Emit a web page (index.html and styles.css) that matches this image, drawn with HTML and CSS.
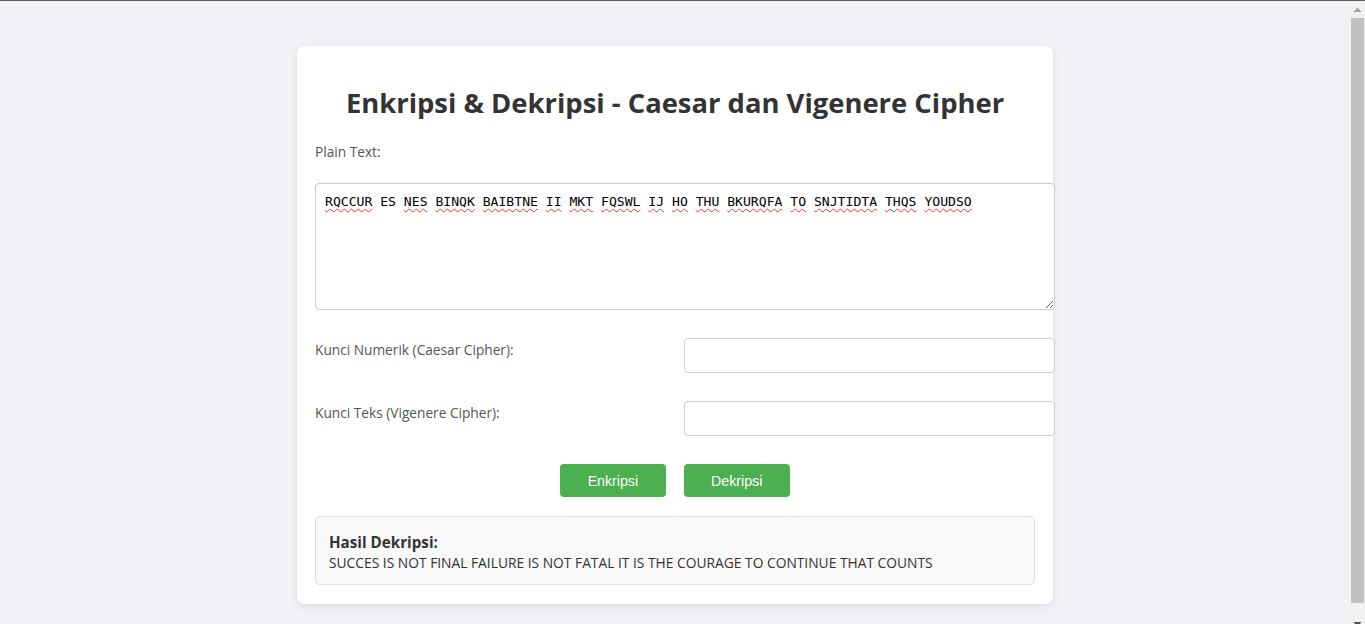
FILE: index.html
```html
<!DOCTYPE html>
<html lang="id">
<head>
<meta charset="utf-8">
<title>Enkripsi &amp; Dekripsi - Caesar dan Vigenere Cipher</title>
<link rel="stylesheet" href="styles.css">
</head>
<body>
<div class="card">
  <h1 class="title">Enkripsi &amp; Dekripsi - Caesar dan Vigenere Cipher</h1>
  <label class="label label-plain" id="plain-label">Plain Text:</label>
  <div class="plain" contenteditable="true" role="textbox" aria-multiline="true" aria-labelledby="plain-label" spellcheck="false"><span class="typo">RQCCUR</span> ES <span class="typo">NES</span> <span class="typo">BINQK</span> <span class="typo">BAIBTNE</span> <span class="typo">II</span> <span class="typo">MKT</span> <span class="typo">FQSWL</span> <span class="typo">IJ</span> <span class="typo">HO</span> <span class="typo">THU</span> <span class="typo">BKURQFA</span> <span class="typo">TO</span> <span class="typo">SNJTIDTA</span> <span class="typo">THQS</span> <span class="typo">YOUDSO</span></div>
  <div class="row">
    <label class="label row-label" for="knum">Kunci Numerik (Caesar Cipher):</label>
    <input id="knum" class="field" type="text">
  </div>
  <div class="row">
    <label class="label row-label" for="ktext">Kunci Teks (Vigenere Cipher):</label>
    <input id="ktext" class="field" type="text">
  </div>
  <div class="actions">
    <button class="btn" type="button">Enkripsi</button>
    <button class="btn" type="button">Dekripsi</button>
  </div>
  <div class="result">
    <div class="result-title">Hasil Dekripsi:</div>
    <div class="result-text">SUCCES IS NOT FINAL FAILURE IS NOT FATAL IT IS THE COURAGE TO CONTINUE THAT COUNTS</div>
  </div>
</div>
<div class="scrollbar" aria-hidden="true">
  <div class="sb-btn sb-up">
    <svg width="9" height="5" viewBox="0 0 9 5"><path d="M0.5 5 L4.5 0.5 L8.5 5 Z" fill="#a3a3a3"/></svg>
  </div>
  <div class="sb-thumb"></div>
  <div class="sb-track"></div>
  <div class="sb-btn sb-down">
    <svg width="9" height="5" viewBox="0 0 9 5"><path d="M0.5 0 L8.5 0 L4.5 4.5 Z" fill="#505050"/></svg>
  </div>
</div>
</body>
</html>
```
FILE: styles.css
```css
html {
  background: #f0f2f5;
}
body {
  margin: 0;
  padding: 45px 15px 26px 0;
  border-top: 1px solid #5c5c5c;
  background: #f0f2f5;
  font-family: "Open Sans", "Noto Sans", sans-serif;
  color: #333;
}
.card {
  width: 720px;
  margin: 0 auto;
  padding: 18px 18px 19px;
  background: #fff;
  border-radius: 8px;
  box-shadow: 0 2px 10px rgba(0, 0, 0, 0.09);
}
.title {
  margin: 19px 0 0;
  font-size: 27.4px;
  line-height: 40px;
  font-weight: 700;
  text-align: center;
  color: #333;
}
.label {
  font-size: 13.7px;
  line-height: 19px;
  color: #555;
}
.label-plain {
  display: block;
  margin-top: 19px;
}
.plain {
  width: 100%;
  height: 106px;
  margin: 22px 0 0;
  padding: 10px 9px 9px;
  border: 1px solid #ccc;
  border-radius: 4px;
  font-family: "DejaVu Sans Mono", "Liberation Mono", monospace;
  font-size: 13.1px;
  line-height: 16px;
  color: #000;
  background: #fff;
  overflow: auto;
  resize: vertical;
  outline: none;
}
.typo {
  text-decoration: underline wavy #ee3333;
  text-decoration-thickness: 1px;
  text-underline-offset: 2px;
}
.row {
  display: flex;
  align-items: flex-start;
  margin-top: 28px;
}
.row-label {
  flex: 0 0 369px;
  padding-top: 2px;
}
.field {
  flex: 0 0 349px;
  height: 33px;
  margin: 0;
  padding: 0 10px;
  border: 1px solid #ccc;
  border-radius: 4px;
  font-size: 14px;
  background: #fff;
}
.actions {
  display: flex;
  justify-content: center;
  gap: 18px;
  margin-top: 28px;
}
.btn {
  height: 33px;
  padding: 0 27.5px;
  border: none;
  border-radius: 4px;
  background: #4caf50;
  color: #fff;
  font-family: "Liberation Sans", Arial, sans-serif;
  font-size: 14.2px;
  cursor: pointer;
}
.result {
  margin-top: 19px;
  padding: 14px 13px 11px;
  background: #f9f9f9;
  border: 1px solid #ddd;
  border-radius: 5px;
}
.result-title {
  font-size: 15.2px;
  line-height: 22px;
  font-weight: 700;
  color: #333;
}
.result-text {
  font-size: 13.8px;
  line-height: 20px;
  color: #333;
}

/* classic browser scrollbar drawn over the right edge */
.scrollbar {
  position: fixed;
  top: 1px;
  right: 0;
  width: 15px;
  height: 634px;
  display: flex;
  flex-direction: column;
  background: #f1f1f1;
}
.sb-btn {
  flex: 0 0 17px;
  display: flex;
  justify-content: center;
}
.sb-up {
  align-items: center;
}
.sb-down {
  align-items: flex-start;
  padding-top: 4px;
  box-sizing: border-box;
}
.sb-thumb {
  flex: 0 0 585px;
  margin: 0 1px 0 1px;
  background: #c1c1c1;
}
.sb-track {
  flex: 1;
}
```
